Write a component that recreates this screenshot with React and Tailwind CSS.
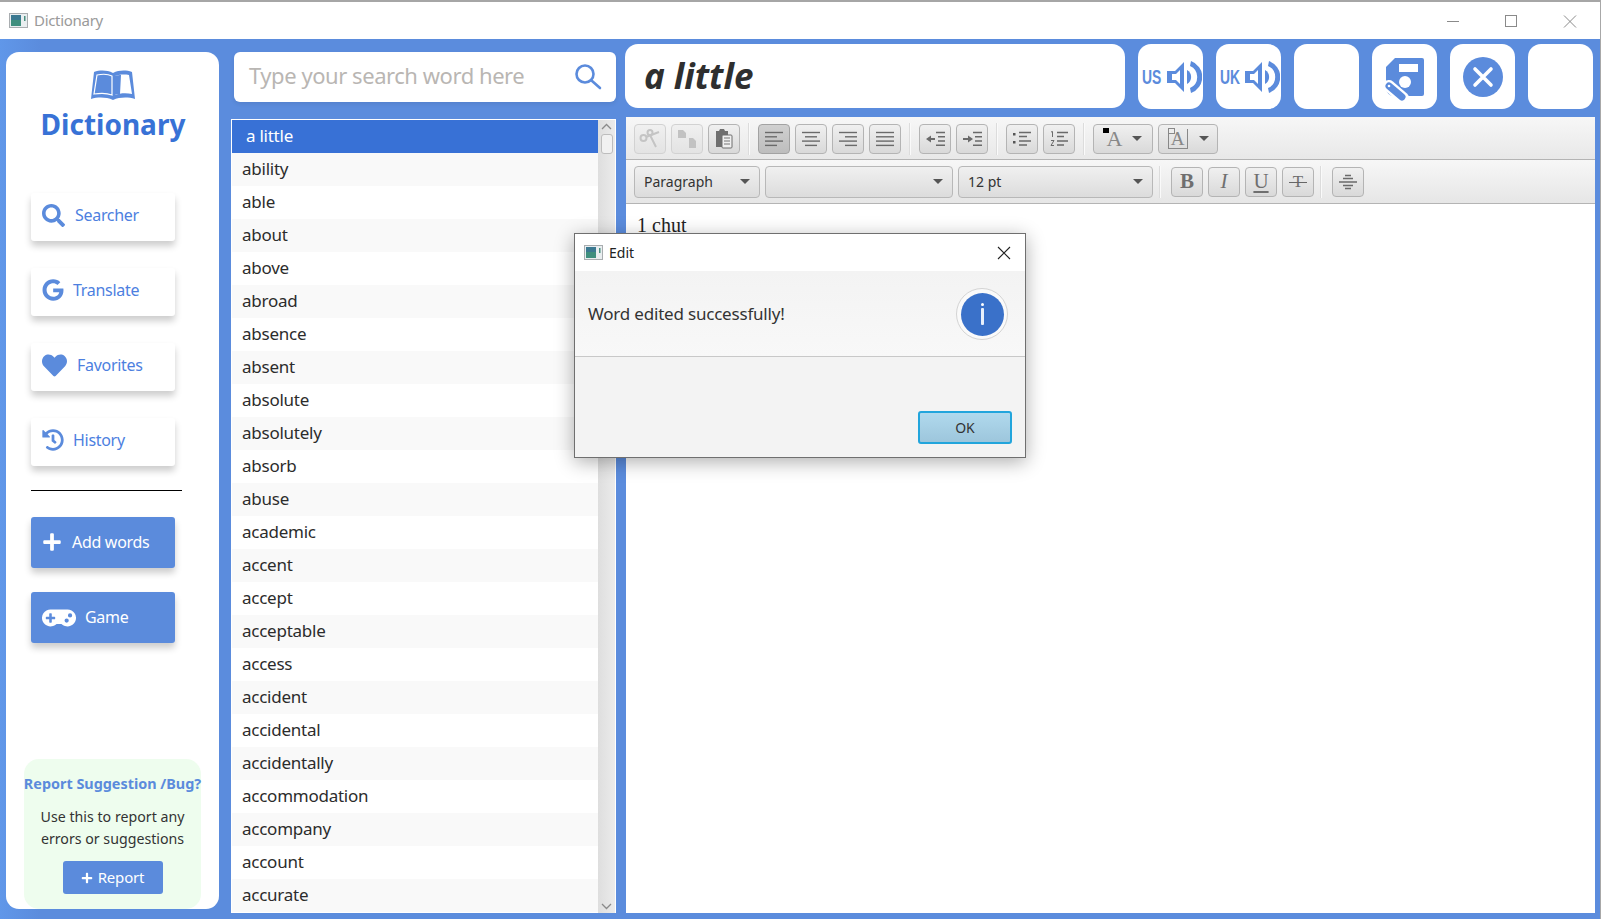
import React from "react";
import { FaSearch, FaGoogle, FaHeart, FaHistory, FaPlus, FaGamepad } from "react-icons/fa";

const words = ["ability","able","about","above","abroad","absence","absent","absolute","absolutely","absorb","abuse","academic","accent","accept","acceptable","access","accident","accidental","accidentally","accommodation","accompany","account","accurate"];

function AppIcon() {
  return (
    <svg width="19" height="15" viewBox="0 0 19 15" className="shrink-0">
      <rect x="0.5" y="0.5" width="18" height="14" fill="#e9eef0" stroke="#a9adb0" />
      <rect x="2" y="2" width="10" height="11" fill="#3f8f7e" />
      <rect x="2" y="2" width="10" height="5" fill="#3a6f9a" opacity="0.7" />
      <rect x="15" y="3" width="1.5" height="5" fill="#4a8f80" />
    </svg>
  );
}

function NavCard({ icon, label, gap }) {
  return (
    <div className="ml-[25px] w-[144px] h-[48px] bg-white rounded-[3px] shadow-[0_5px_7px_rgba(0,0,0,0.2)] flex items-center pl-[11px] pb-[4px] text-[#4d7fdf] text-[16px] tracking-[-0.3px]">
      <span className="text-[#5b8bdc] flex items-center justify-center">{icon}</span>
      <span className={gap}>{label}</span>
    </div>
  );
}

function ToolBtn({ children, active, disabled, w = "w-[32px]", cls = "" }) {
  const bg = active
    ? "bg-[linear-gradient(180deg,#d0d0d0,#bdbdbd)] border-[#a2a2a2]"
    : disabled
    ? "bg-[linear-gradient(180deg,#f0f0f0,#e3e3e3)] border-[#d2d2d2]"
    : "bg-[linear-gradient(180deg,#f0f0f0,#d9d9d9)] border-[#b4b4b4]";
  return (
    <div className={`${w} h-[30px] shrink-0 rounded-[4px] border flex items-center justify-center ${bg} ${cls}`}>
      {children}
    </div>
  );
}

function Sep() {
  return <div className="w-[1px] h-[32px] bg-[#dcdcdc] border-r border-[#fafafa] box-content shrink-0" />;
}

function Lines({ rows }) {
  return (
    <svg width="20" height="16" viewBox="0 0 20 16" stroke="#6a6a6a" strokeWidth="1.4">
      {rows.map((r, i) => (
        <line key={i} x1={r[0]} x2={r[1]} y1={1.5 + i * 4.3} y2={1.5 + i * 4.3} />
      ))}
    </svg>
  );
}

function Caret({ cls = "" }) {
  return <div className={`w-0 h-0 border-l-[5px] border-r-[5px] border-t-[5px] border-l-transparent border-r-transparent border-t-[#555] ${cls}`} />;
}

function Select({ w, label }) {
  return (
    <div className={`${w} h-[32px] shrink-0 rounded-[4px] border border-[#b8b8b8] bg-[linear-gradient(180deg,#f0f0f0,#dcdcdc)] flex items-center pl-[9px] pr-[9px] justify-between text-[14px] text-[#333]`}>
      <span>{label}</span>
      <Caret />
    </div>
  );
}

function Speaker() {
  return (
    <svg width="36" height="36" viewBox="0 0 36 36" className="shrink-0">
      <path d="M1 12h8l9-9v30l-9-9H1z" fill="#5b8bdc" />
      <path d="M6 15h4l4-4v14l-4-4H6z" fill="#fff" />
      <path d="M21 11a8 8 0 0 1 0 14z" fill="#5b8bdc" />
      <path d="M25 2a17 17 0 0 1 0 32l-1-5a12 12 0 0 0 0-22z" fill="#5b8bdc" />
    </svg>
  );
}

function SquareBtn({ children }) {
  return <div className="w-[65px] h-[65px] rounded-[13px] bg-white flex items-center justify-center overflow-hidden shrink-0">{children}</div>;
}

function Accent({ label }) {
  return (
    <div className="flex items-center pl-[4px] w-full">
      <span className="w-[24px] font-['Liberation_Sans',sans-serif] font-bold text-[#5b8bdc] text-[21px] leading-none inline-block origin-left scale-x-[0.66] whitespace-nowrap">{label}</span>
      <Speaker />
    </div>
  );
}

export default function App() {
  return (
    <div className="relative w-[1601px] h-[919px] overflow-hidden bg-white border-r border-[#a8a8a8] font-['Noto_Sans',sans-serif]">
      <div className="h-[2px] bg-[#a6a6a6]" />
      <div className="h-[37px] bg-white flex items-center pl-[9px] pr-[23px] text-[15px] tracking-[-0.3px] text-[#9a9a9a]">
        <AppIcon />
        <span className="ml-[6px] flex-1">Dictionary</span>
        <svg width="130" height="14" viewBox="0 0 130 14" fill="none" stroke="#8a8a8a" strokeWidth="1">
          <line x1="0" x2="12" y1="7.5" y2="7.5" />
          <rect x="58.5" y="1.5" width="11" height="11" />
          <path d="M117 1.5l12 12M129 1.5l-12 12" />
        </svg>
      </div>

      <div className="h-[880px] flex bg-[linear-gradient(90deg,#6097e9,#5b8cdd_40px)]">
        {/* Sidebar */}
        <div className="ml-[6px] mt-[13px] w-[213px] h-[857px] bg-white rounded-[13px] flex flex-col">
          <div className="flex justify-center pt-[17px]">
            <svg width="44" height="31" viewBox="0 0 44 31">
              <path d="M3 3c6-2 13-2 19 1 6-3 13-3 19-1l3 27c-7-2-15-2-22 1-7-3-15-3-22-1z" fill="#5b8bdc" />
              <path d="M6 6c5-1 11-1 15 1v19c-5-2-12-2-18-1z" fill="#5b8bdc" stroke="#fff" strokeWidth="1.2" />
              <path d="M24 7c3-1 8-2 14-1l3 19c-5-1-12-1-17 1z" fill="#fff" />
              <path d="M24 7c2-1 5-1 6-1l-1 19c-2 0-4 0-5 1z" fill="#5b8bdc" />
            </svg>
          </div>
          <div className="text-center font-bold text-[#3872d6] text-[28px] leading-[38px] mt-[5px] mb-[50px] pl-[1px]">Dictionary</div>
          <div className="flex flex-col gap-[27px]">
            <NavCard icon={<FaSearch size={23} />} label="Searcher" gap="ml-[10px]" />
            <NavCard icon={<FaGoogle size={22} />} label="Translate" gap="ml-[9px]" />
            <NavCard icon={<FaHeart size={25} />} label="Favorites" gap="ml-[10px]" />
            <NavCard icon={<FaHistory size={22} />} label="History" gap="ml-[9px]" />
          </div>
          <div className="ml-[25px] w-[151px] h-[1px] bg-black mt-[24px]" />
          <div className="ml-[25px] mt-[26px] w-[144px] h-[51px] bg-[#5b8bdc] rounded-[3px] shadow-[0_5px_7px_rgba(0,0,0,0.2)] flex items-center pl-[11px] pb-[2px] text-white text-[16px] tracking-[-0.3px]">
            <FaPlus size={20} />
            <span className="ml-[10px]">Add words</span>
          </div>
          <div className="ml-[25px] mt-[24px] w-[144px] h-[51px] bg-[#5b8bdc] rounded-[3px] shadow-[0_5px_7px_rgba(0,0,0,0.2)] flex items-center pl-[11px] pb-[2px] text-white text-[16px] tracking-[-0.3px]">
            <FaGamepad size={34} className="mt-[3px]" />
            <span className="ml-[9px]">Game</span>
          </div>
          <div className="mt-auto ml-[18px] w-[177px] h-[150px] rounded-[15px] bg-[#eefdee] flex flex-col items-center">
            <div className="mt-[15px] font-bold text-[#5b8bdc] text-[14.4px] leading-[20px] whitespace-nowrap">Report Suggestion /Bug?</div>
            <div className="mt-[12px] text-center text-[#333] text-[14.2px] leading-[22px]">
              Use this to report any<br />errors or suggestions
            </div>
            <div className="mt-[11px] w-[100px] h-[33px] rounded-[3px] bg-[#5b8bdc] text-white text-[15px] tracking-[-0.2px] flex items-center justify-center gap-[5px]">
              <FaPlus size={12} />
              <span>Report</span>
            </div>
          </div>
        </div>

        {/* List column */}
        <div className="ml-[12px] w-[385px] flex flex-col">
          <div className="ml-[3px] mt-[13px] w-[382px] h-[50px] bg-white rounded-[6px] flex items-center pl-[15px] pr-[14px] justify-between shadow-[0_2px_4px_rgba(0,0,0,0.08)]">
            <span className="text-[22px] tracking-[-0.45px] text-[#b9b6b3] pb-[3px]">Type your search word here</span>
            <svg width="28" height="28" viewBox="0 0 28 28" fill="none" stroke="#5b8bdc" strokeWidth="2.6" strokeLinecap="round">
              <circle cx="11" cy="11" r="8.5" />
              <line x1="17.5" y1="17.5" x2="26" y2="25" />
            </svg>
          </div>
          <div className="mt-[17px] h-[794px] bg-white border-t border-l border-white flex">
            <div className="flex-1 flex flex-col tracking-[-0.25px]">
              <div className="h-[33px] bg-[#3871d6] text-white text-[17px] flex items-center pl-[14px] pb-[1px]">a little</div>
              {words.map((w, i) => (
                <div key={w} className={`h-[33px] shrink-0 flex items-center pl-[10px] pb-[1px] text-[17px] text-[#2c2c2c] ${i % 2 === 0 ? "bg-[#f9f9f9]" : "bg-white"}`}>{w}</div>
              ))}
            </div>
            <div className="w-[17px] mr-[1px] bg-[linear-gradient(90deg,#dedede,#ebebeb)] flex flex-col items-center justify-between">
              <div className="flex flex-col items-center">
                <svg width="11" height="7" viewBox="0 0 11 7" fill="none" stroke="#8a8a8a" strokeWidth="1.3" className="mt-[3px]"><path d="M1 6l4.5-4.5L10 6" /></svg>
                <div className="w-[12px] h-[20px] mt-[4px] rounded-[3px] border border-[#bdbdbd] bg-[#f1f1f1]" />
              </div>
              <svg width="11" height="7" viewBox="0 0 11 7" fill="none" stroke="#8a8a8a" strokeWidth="1.3" className="mb-[3px]"><path d="M1 1l4.5 4.5L10 1" /></svg>
            </div>
          </div>
        </div>

        {/* Right column */}
        <div className="ml-[9px] w-[970px] flex flex-col">
          <div className="mt-[5px] h-[65px] flex">
            <div className="w-[500px] h-[64px] rounded-[13px] bg-white flex items-center pl-[19px] text-[#2f2f2f] font-bold italic text-[35px]">a little</div>
            <div className="ml-[13px] flex gap-[13px]">
              <SquareBtn><Accent label="US" /></SquareBtn>
              <SquareBtn><Accent label="UK" /></SquareBtn>
              <SquareBtn />
              <SquareBtn>
                <svg width="65" height="65" viewBox="0 0 65 65">
                  <path d="M23 14h27a2 2 0 0 1 2 2v34a2 2 0 0 1-2 2H22a8 8 0 0 1-8-8V23z" fill="#5b8bdc" />
                  <rect x="27" y="20" width="19" height="8" fill="#fff" />
                  <circle cx="33" cy="38" r="6" fill="#fff" />
                  <line x1="17" y1="42" x2="31" y2="54" stroke="#fff" strokeWidth="12" strokeLinecap="round" />
                  <line x1="17" y1="42" x2="30" y2="53" stroke="#5b8bdc" strokeWidth="7" strokeLinecap="round" />
                  <circle cx="17" cy="42" r="1.3" fill="#fff" />
                </svg>
              </SquareBtn>
              <SquareBtn>
                <svg width="65" height="65" viewBox="0 0 65 65">
                  <circle cx="33" cy="33" r="20" fill="#5b8bdc" />
                  <path d="M25 25l16 16M41 25L25 41" stroke="#fff" strokeWidth="3.6" strokeLinecap="round" />
                </svg>
              </SquareBtn>
              <SquareBtn />
            </div>
          </div>

          <div className="mt-[8px] ml-[1px] w-[969px] h-[796px] bg-white flex flex-col">
            {/* Toolbar row 1 */}
            <div className="h-[43px] shrink-0 border-b border-[#b4b4b4] bg-[linear-gradient(180deg,#f7f7f7,#e8e8e8)] flex items-center pl-[8px] gap-[5px] pt-[1px]">
              <ToolBtn disabled>
                <svg width="22" height="20" viewBox="0 0 22 20" fill="none" stroke="#c4c4c4" strokeWidth="2"><circle cx="4.5" cy="9" r="3" /><circle cx="11" cy="3.5" r="2.5" /><path d="M7 8l13-5M11 6l6 12" /></svg>
              </ToolBtn>
              <ToolBtn disabled>
                <svg width="22" height="20" viewBox="0 0 22 20" fill="#c2c2c2"><path d="M2 1h5l3 3v5H2z" /><path d="M13 9h4l3 3v7h-7z" /></svg>
              </ToolBtn>
              <ToolBtn>
                <svg width="18" height="21" viewBox="0 0 18 21"><path d="M1 3h3l1-2h4l1 2h3v16H1z" fill="#6f6f6f" /><rect x="7" y="7" width="10" height="13" rx="1" fill="#f0f0f0" stroke="#6f6f6f" /><path d="M9 10h6M9 13h6M9 16h6" stroke="#777" /></svg>
              </ToolBtn>
              <div className="mx-[3px]"><Sep /></div>
              <ToolBtn active><Lines rows={[[1,19],[1,13],[1,19],[1,13]]} /></ToolBtn>
              <ToolBtn><Lines rows={[[1,19],[4,16],[1,19],[4,16]]} /></ToolBtn>
              <ToolBtn><Lines rows={[[1,19],[7,19],[1,19],[7,19]]} /></ToolBtn>
              <ToolBtn><Lines rows={[[1,19],[1,19],[1,19],[1,19]]} /></ToolBtn>
              <div className="mx-[3px]"><Sep /></div>
              <ToolBtn>
                <svg width="20" height="16" viewBox="0 0 20 16" stroke="#6a6a6a" strokeWidth="1.4"><path d="M11 1.5h9M13 5.8h7M13 10h7M11 14.3h9" /><path d="M1 8l5-3.5v2.5h4v2H6v2.5z" fill="#6a6a6a" stroke="none" /></svg>
              </ToolBtn>
              <ToolBtn>
                <svg width="20" height="16" viewBox="0 0 20 16" stroke="#6a6a6a" strokeWidth="1.4"><path d="M11 1.5h9M13 5.8h7M13 10h7M11 14.3h9" /><path d="M11 8L6 4.5V7H1v2h5v2.5z" fill="#6a6a6a" stroke="none" /></svg>
              </ToolBtn>
              <div className="mx-[3px]"><Sep /></div>
              <ToolBtn>
                <svg width="20" height="16" viewBox="0 0 20 16" stroke="#6a6a6a" strokeWidth="1.4"><rect x="1" y="2" width="2.5" height="2.5" fill="#555" stroke="none" /><rect x="1" y="10" width="2.5" height="2.5" fill="#555" stroke="none" /><path d="M7 1.5h12M7 5.5h8M7 10h12M7 14h8" /></svg>
              </ToolBtn>
              <ToolBtn>
                <svg width="20" height="16" viewBox="0 0 20 16" stroke="#6a6a6a" strokeWidth="1.4"><path d="M2 1l1.5-.5V6M2 9.5h3L2 14.5h3" fill="none" strokeWidth="1" /><path d="M8 1.5h11M8 5.5h7M8 10h11M8 14h7" /></svg>
              </ToolBtn>
              <div className="mx-[3px]"><Sep /></div>
              <ToolBtn w="w-[60px]">
                <div className="flex items-center gap-[10px] pl-[3px]">
                  <div className="relative font-['Liberation_Serif',serif] text-[22px] leading-none text-[#888]">
                    A
                    <div className="absolute -left-[4px] top-0 w-[6px] h-[5px] bg-black" />
                  </div>
                  <Caret />
                </div>
              </ToolBtn>
              <ToolBtn w="w-[60px]">
                <div className="flex items-center gap-[11px]">
                  <div className="relative w-[20px] h-[20px] border-l border-b border-r border-[#888] flex items-center justify-center font-['Liberation_Serif',serif] text-[19px] leading-none text-[#888]">
                    A
                    <div className="absolute -left-[1px] -top-[1px] w-[7px] h-[6px] border border-[#888] bg-[#eee]" />
                  </div>
                  <Caret />
                </div>
              </ToolBtn>
            </div>
            {/* Toolbar row 2 */}
            <div className="h-[44px] shrink-0 border-b border-[#b4b4b4] bg-[linear-gradient(180deg,#f7f7f7,#e6e6e6)] flex items-center pl-[8px]">
              <Select w="w-[126px]" label="Paragraph" />
              <div className="ml-[5px]"><Select w="w-[188px]" label="" /></div>
              <div className="ml-[5px]"><Select w="w-[195px]" label="12 pt" /></div>
              <div className="mx-[6px]"><Sep /></div>
              <div className="flex gap-[5px] ml-[4px] font-['Liberation_Serif',serif] text-[#6f6f6f] text-[21px] leading-none">
                <ToolBtn><b>B</b></ToolBtn>
                <ToolBtn><i>I</i></ToolBtn>
                <ToolBtn><span className="underline underline-offset-[3px]">U</span></ToolBtn>
                <ToolBtn>
                  <div className="relative w-[18px] flex justify-center text-[17px]">
                    T
                    <div className="absolute left-0 top-[9px] w-[18px] h-[1px] bg-[#666]" />
                  </div>
                </ToolBtn>
              </div>
              <div className="mx-[6px]"><Sep /></div>
              <div className="ml-[4px]">
                <ToolBtn>
                  <svg width="20" height="16" viewBox="0 0 20 16" stroke="#6a6a6a" strokeWidth="1.4"><path d="M7 1.5h6M5 4.5h10M1 8h18M5 11.5h10M7 14.5h6" /></svg>
                </ToolBtn>
              </div>
            </div>
            <div className="flex-1 bg-white pl-[11px] pt-[10px] font-['Liberation_Serif',serif] text-[20px] leading-[22px] text-[#222]">1 chut</div>
          </div>
        </div>
      </div>

      {/* Dialog */}
      <div className="absolute left-[574px] top-[233px] w-[452px] h-[225px] border border-[#6f6f6f] bg-[#f3f3f3] shadow-[0_4px_18px_rgba(0,0,0,0.32)] flex flex-col">
        <div className="h-[37px] shrink-0 bg-white flex items-center pl-[9px] pr-[14px] text-[14px] text-[#222]">
          <AppIcon />
          <span className="ml-[6px] flex-1">Edit</span>
          <svg width="14" height="14" viewBox="0 0 14 14" stroke="#222" strokeWidth="1.1"><path d="M1 1l12 12M13 1L1 13" /></svg>
        </div>
        <div className="h-[86px] shrink-0 border-b border-[#c8c8c8] bg-[linear-gradient(180deg,#f3f3f3,#f8f8f8)] flex items-center pl-[13px] pr-[17px] justify-between text-[17px] tracking-[-0.2px] text-[#333]">
          <span className="pt-[1px]">Word edited successfully!</span>
          <div className="w-[52px] h-[52px] mt-[1px] rounded-full bg-[#fafafa] border border-[#d4d4d4] flex items-center justify-center">
            <div className="w-[43px] h-[43px] rounded-full bg-[#3a71c9] flex flex-col items-center justify-center gap-[2px]">
              <div className="w-[3px] h-[3px] bg-white rounded-full" />
              <div className="w-[3px] h-[17px] bg-[#e8f0fb] rounded-[1px]" />
            </div>
          </div>
        </div>
        <div className="flex-1 flex items-end justify-end pr-[13px] pb-[13px]">
          <div className="w-[94px] h-[33px] rounded-[3px] border-2 border-[#22a5dc] bg-[linear-gradient(180deg,#b0d9ed,#9dc6dc)] flex items-center justify-center text-[14px] text-[#333]">OK</div>
        </div>
      </div>
    </div>
  );
}
